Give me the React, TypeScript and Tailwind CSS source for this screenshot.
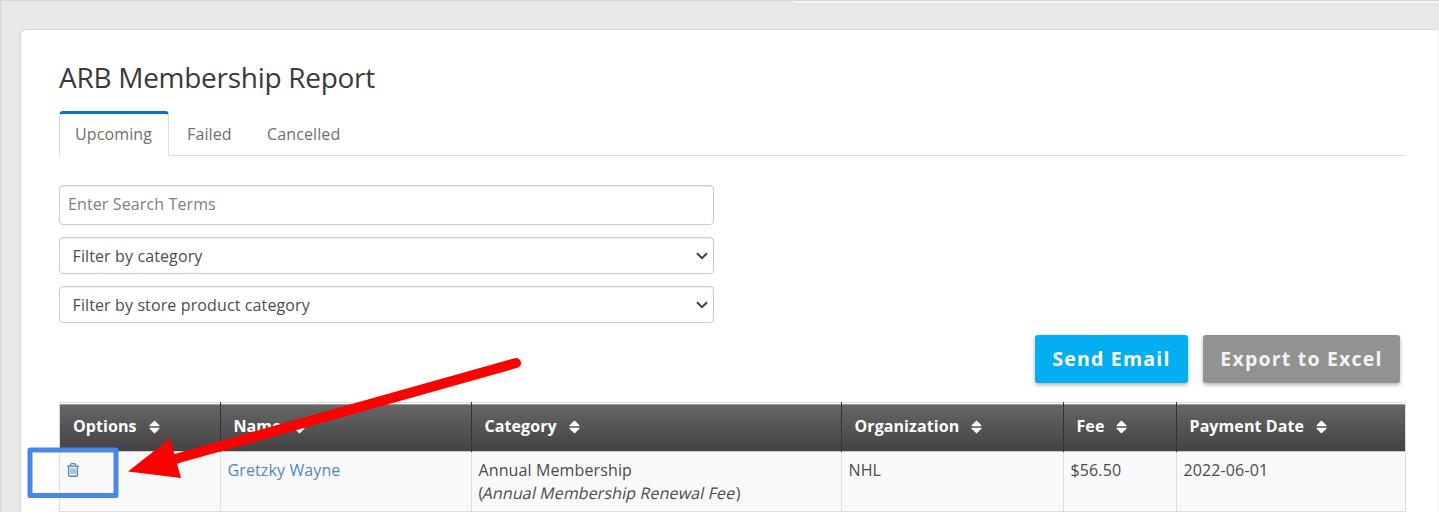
const tabs = ["Upcoming", "Failed", "Cancelled"];

const filters = ["Filter by category", "Filter by store product category"];

const columns = ["Options", "Name", "Category", "Organization", "Fee", "Payment Date"];

const rowGrid = "grid grid-cols-[161px_251px_370px_222px_113px_228px]";

function SortIcon() {
  return (
    <svg width="11" height="14" viewBox="0 0 11 14" fill="#fff" className="mt-px">
      <path d="M5.5.5 10.4 5.3Q10.8 6.2 10 6.2H1Q.2 6.2.6 5.3Z" />
      <path d="M5.5 13.5.6 8.7Q.2 7.8 1 7.8h9q.8 0 .4.9Z" />
    </svg>
  );
}

function TrashIcon() {
  return (
    <svg width="12" height="14" viewBox="0 0 12 14" fill="none" stroke="#4f89c4">
      <path d="M0 3.2h12M3.7 3V1.5Q3.7.7 4.5.7h3q.8 0 .8.8V3" strokeWidth="1.3" />
      <path d="M1.6 3v9.2q0 1.1 1.1 1.1h6.6q1.1 0 1.1-1.1V3" strokeWidth="1.4" />
      <path d="M4 5.3v5.6M6 5.3v5.6M8 5.3v5.6" />
    </svg>
  );
}

function Tabs() {
  return (
    <div className="flex h-[45px] w-[1347px] border-b border-[#ddd]">
      {tabs.map((tab, i) => (
        <div
          key={tab}
          className={
            i === 0
              ? "h-[45px] w-[110px] rounded-t border-x border-t-[3px] border-x-[#ddd] border-t-[#0b6fd0] bg-white pl-[15px] pt-2"
              : i === 1
                ? "ml-[18px] w-[80px] pt-[11px]"
                : "pt-[11px]"
          }
        >
          {tab}
        </div>
      ))}
    </div>
  );
}

function Select({ label }: { label: string }) {
  return (
    <div className="mt-3 flex h-[37px] w-[655px] items-center justify-between rounded border border-[#ccc] pl-[12.5px] pr-[5px] text-[#4d4d4d] shadow-[inset_0_1px_1px_rgba(0,0,0,0.075)]">
      {label}
      <svg width="12" height="8" viewBox="0 0 12 8" fill="none" stroke="#3f3f3f" strokeWidth="2">
        <path d="M1 1.3 6 6.2l5-4.9" />
      </svg>
    </div>
  );
}

function ReportTable() {
  return (
    <div className="mt-[19px] w-[1347px] border border-[#ddd]">
      <div className={`${rowGrid} h-12 bg-white pt-px`}>
        {columns.map((col, i) => (
          <div
            key={col}
            className={`-mt-[2px] h-[50px] pt-[2px] ${i < columns.length - 1 ? "border-r border-[#333]" : ""}`}
          >
            <div
              className={`flex h-[47px] items-center gap-3 border-t border-[#999] bg-linear-to-b from-[#666] to-[#434343] pb-1 font-bold tracking-[0.08px] text-white ${i === 0 ? "pl-[13px]" : "pl-[12.5px]"}`}
            >
              {col}
              <SortIcon />
            </div>
          </div>
        ))}
      </div>
      <div className={`${rowGrid} h-[60px] border-t border-[#ccc] bg-[#f9f9f9] leading-[23px] text-[#4b4b4b] *:border-r *:border-[#ddd] *:pl-[6.5px] *:pt-[7px] *:last:border-r-0`}>
        <div>
          <div className="pt-1">
            <TrashIcon />
          </div>
        </div>
        <div className="text-[#4f89c4]">Gretzky Wayne</div>
        <div>
          Annual Membership
          <br />(<span className="inline-block -skew-x-12">Annual Membership Renewal Fee</span>)
        </div>
        <div>NHL</div>
        <div>$56.50</div>
        <div>2022-06-01</div>
      </div>
    </div>
  );
}

/* Arrow and box pointing at the delete action */
function Callout() {
  return (
    <svg className="absolute -left-px -top-px" width="540" height="512" viewBox="0 0 540 512">
      <rect x="30" y="450" width="86" height="45.5" fill="none" stroke="#4a86e8" strokeWidth="5" strokeLinejoin="round" />
      <path d="M175 459 516 363" stroke="#f00" strokeWidth="10" strokeLinecap="round" />
      <path d="M128 471.5 170 438.5 181 478Z" fill="#f00" />
    </svg>
  );
}

export default function App() {
  return (
    <div className="relative h-[512px] w-[1439px] overflow-hidden border-l border-t border-[#d8d8d8] bg-[#e8e8e8] font-['Open_Sans',sans-serif] text-base leading-6 tracking-[0.12px] text-[#6f6f6f]">
      <div className="ml-[793px] h-[2px] rounded-bl bg-[#f4f4f4]" />
      <div className="ml-[19px] mt-[26px] h-[500px] rounded-tl-md border border-[#d6d6d6] border-r-[#f4f4f4] bg-white pl-[38px]">
        <h1 className="pt-[27px] text-[28px] leading-10 tracking-[-0.28px] text-[#3a3a3a]">ARB Membership Report</h1>
        <div className="mt-[14px]">
          <Tabs />
        </div>
        <div className="mt-[29px] flex h-10 w-[655px] items-center rounded border border-[#ccc] pl-2 pb-[2px] text-[#808080] shadow-[inset_0_1px_1px_rgba(0,0,0,0.075)]">
          Enter Search Terms
        </div>
        {filters.map((label) => (
          <Select key={label} label={label} />
        ))}
        <div className="mt-3 flex w-[1341px] justify-end gap-[15px] text-[19.5px] font-bold tracking-[1.2px] text-white">
          <div className="flex h-12 w-[153px] items-center justify-center rounded-[3px] bg-[#03aef3] shadow-[0_2px_4px_rgba(0,0,0,0.3)]">
            Send Email
          </div>
          <div className="flex h-12 w-[197px] items-center justify-center rounded-[3px] bg-[#929292] text-[#f4f4f4] shadow-[0_2px_4px_rgba(0,0,0,0.3)]">
            Export to Excel
          </div>
        </div>
        <ReportTable />
      </div>
      <Callout />
    </div>
  );
}
